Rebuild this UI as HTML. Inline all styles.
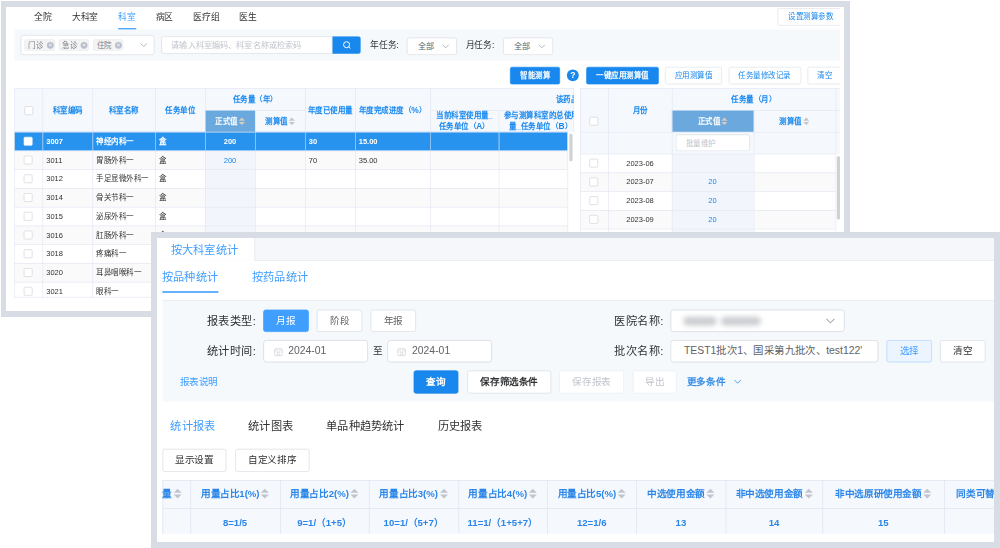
<!DOCTYPE html>
<html lang="zh-CN"><head><meta charset="utf-8"><title>UI</title><style>
html,body{margin:0;padding:0}
body{width:1000px;height:548px;overflow:hidden;background:#fff;position:relative;font-family:"Liberation Sans",sans-serif}
div{position:absolute;box-sizing:border-box}
.frame{background:#d8dde5}
.inner{background:#fff}
.clip{overflow:hidden}
.sc{left:0;top:0;width:1600px;height:900px;transform-origin:0 0}
.t{white-space:nowrap}
.btn{text-align:center;border-radius:3px;border:1px solid #dcdfe6;background:#fff;color:#606266;white-space:nowrap;overflow:hidden}
.btn.primary{background:#1888ee;border-color:#1888ee;color:#fff}
.btn.primary2{background:#409eff;border-color:#409eff;color:#fff}
.btn.bluetx{color:#1888ee}
.btn.light{background:#ecf5ff;border-color:#b3d8ff;color:#409eff}
.btn.dis{color:#c0c4cc;border-color:#ebeef5}
.inp{background:#fff;border:1px solid #d5d9e0;border-radius:4px}
.tag{background:#f4f4f5;border:1px solid #e6e7ea;border-radius:3px;font-size:12px;color:#7a7d84;line-height:16px;padding-left:5px}
.tag .x{position:absolute;right:1px;top:2.5px;width:11px;height:11px;border-radius:50%;background:#b9bfcc}
.tag .x:before,.tag .x:after{content:"";position:absolute;left:5px;top:2.5px;width:1px;height:6px;background:rgba(255,255,255,.75);transform:rotate(45deg)}
.tag .x:after{transform:rotate(-45deg)}
.q{border-radius:50%;background:#1888ee;color:#fff;font-weight:bold;font-size:14px;line-height:19px;text-align:center}
.cb{background:#fff;border:1px solid #cdd1d9;border-radius:2px}
.caret{display:inline-block;position:relative;width:10px;height:14px;vertical-align:middle;margin-left:2px;top:0}
.caret i{position:absolute;left:0;width:0;height:0;border:5px solid transparent}
.caret .up{border-bottom-color:#c0c4cc;top:-4px}
.caret .dn{border-top-color:#c0c4cc;top:8px}
.caret.tan .up{border-bottom-color:#d9cbbd}
.caret.tan .dn{border-top-color:#d9cbbd}
.chev{position:absolute;left:0;top:0}
.blur{top:8px;height:11px;border-radius:6px;background:#cbcdd1;filter:blur(3.5px)}
</style></head><body>
<div class="frame" style="left:1px;top:1px;width:849px;height:316px"></div>
<div class="inner" style="left:6px;top:7px;width:838px;height:304px"></div>
<div class="clip" style="left:0;top:0;width:840px;height:297.5px"><div class="sc" style="transform:scale(.625)">
<div class="t" style="left:55px;top:17px;font-size:14px;color:#303133;line-height:20px;">全院</div>
<div class="t" style="left:115px;top:17px;font-size:14px;color:#303133;line-height:20px;">大科室</div>
<div class="t" style="left:189px;top:17px;font-size:14px;color:#409eff;line-height:20px;">科室</div>
<div class="t" style="left:249px;top:17px;font-size:14px;color:#303133;line-height:20px;">病区</div>
<div class="t" style="left:309px;top:17px;font-size:14px;color:#303133;line-height:20px;">医疗组</div>
<div class="t" style="left:383px;top:17px;font-size:14px;color:#303133;line-height:20px;">医生</div>
<div style="left:188.5px;top:45px;width:29px;height:3.5px;background:#409eff"></div>
<div class="btn plain bluetx" style="left:1244px;top:13px;width:106px;height:28px;line-height:26px;font-size:12px;">设置测算参数</div>
<div style="left:23px;top:47px;width:1321px;height:50px;background:#f5f9fc"></div>
<div class="inp" style="left:33px;top:56px;width:214px;height:32px;"></div>
<div class="tag" style="left:39px;top:63px;width:48.5px;height:18px;"><span>门诊</span><i class="x"></i></div>
<div class="tag" style="left:93.6px;top:63px;width:48.5px;height:18px;"><span>急诊</span><i class="x"></i></div>
<div class="tag" style="left:148.6px;top:63px;width:48.5px;height:18px;"><span>住院</span><i class="x"></i></div>
<div style="left:224px;top:68px;width:12px;height:8px"><svg class="chev" viewBox="0 0 12 8" width="12" height="8"><path d="M1 1.5 L6 6.5 L11 1.5" fill="none" stroke="#a8abb2" stroke-width="1.4"/></svg></div>
<div class="inp" style="left:258px;top:58px;width:274px;height:28px;border-radius:4px 0 0 4px"></div>
<div class="t" style="left:274px;top:62px;font-size:13px;color:#c0c4cc;line-height:20px;">请输入科室编码、科室名称或检索码</div>
<div style="left:532px;top:58px;width:45px;height:28px;background:#1888ee;border-radius:0 4px 4px 0"><svg viewBox="0 0 16 16" width="16" height="16" style="position:absolute;left:15px;top:6px"><circle cx="7.5" cy="7.5" r="4.8" fill="none" stroke="#fff" stroke-width="1.6"/><path d="M11 11 L13.5 13.5" stroke="#fff" stroke-width="1.6"/></svg></div>
<div class="t" style="left:592px;top:62px;font-size:14px;color:#303133;line-height:20px;">年任务:</div>
<div class="inp" style="left:651px;top:59.5px;width:80px;height:28px;"></div>
<div class="t" style="left:668px;top:63.5px;font-size:13px;color:#606266;line-height:20px;">全部</div>
<div style="left:707px;top:70px;width:12px;height:8px"><svg class="chev" viewBox="0 0 12 8" width="12" height="8"><path d="M1 1.5 L6 6.5 L11 1.5" fill="none" stroke="#a8abb2" stroke-width="1.4"/></svg></div>
<div class="t" style="left:745px;top:62px;font-size:14px;color:#303133;line-height:20px;">月任务:</div>
<div class="inp" style="left:805px;top:59.5px;width:80px;height:28px;"></div>
<div class="t" style="left:822px;top:63.5px;font-size:13px;color:#606266;line-height:20px;">全部</div>
<div style="left:861px;top:70px;width:12px;height:8px"><svg class="chev" viewBox="0 0 12 8" width="12" height="8"><path d="M1 1.5 L6 6.5 L11 1.5" fill="none" stroke="#a8abb2" stroke-width="1.4"/></svg></div>
<div class="btn primary" style="left:816px;top:107px;width:80px;height:28px;line-height:26px;font-size:12px;font-weight:bold;">智能测算</div>
<div class="q" style="left:907px;top:111px;width:19px;height:19px">?</div>
<div class="btn primary" style="left:938px;top:107px;width:115.5px;height:28px;line-height:26px;font-size:12px;font-weight:bold;">一键应用测算值</div>
<div class="btn plain bluetx" style="left:1063.5px;top:107px;width:91.5px;height:28px;line-height:26px;font-size:12px;">应用测算值</div>
<div class="btn plain bluetx" style="left:1165.5px;top:107px;width:116px;height:28px;line-height:26px;font-size:12px;">任务量修改记录</div>
<div class="btn plain bluetx" style="left:1291.5px;top:107px;width:56.5px;height:28px;line-height:26px;font-size:12px;">清空</div>
<div style="left:23px;top:141px;width:895px;height:70px;background:#f5f8fd"></div>
<div style="left:328px;top:211px;width:80px;height:309px;background:#f2f6fc"></div>
<div style="left:23px;top:241px;width:305px;height:30px;background:#fafafa"></div>
<div style="left:408px;top:241px;width:500px;height:30px;background:#fafafa"></div>
<div style="left:23px;top:301px;width:305px;height:30px;background:#fafafa"></div>
<div style="left:408px;top:301px;width:500px;height:30px;background:#fafafa"></div>
<div style="left:23px;top:361px;width:305px;height:30px;background:#fafafa"></div>
<div style="left:408px;top:361px;width:500px;height:30px;background:#fafafa"></div>
<div style="left:23px;top:421px;width:305px;height:30px;background:#fafafa"></div>
<div style="left:408px;top:421px;width:500px;height:30px;background:#fafafa"></div>
<div style="left:23px;top:211px;width:885px;height:30px;background:#2793ef"></div>
<div style="left:328px;top:176px;width:80px;height:35px;background:#6aa8de"></div>
<div style="left:23px;top:141px;width:895px;height:1px;background:#e2e6f3"></div>
<div style="left:328px;top:176px;width:160px;height:1px;background:#e2e6f3"></div>
<div style="left:688px;top:176px;width:230px;height:1px;background:#e2e6f3"></div>
<div style="left:23px;top:211px;width:885px;height:1px;background:#e2e6f3"></div>
<div style="left:23px;top:241px;width:885px;height:1px;background:#e2e6f3"></div>
<div style="left:23px;top:271px;width:885px;height:1px;background:#e2e6f3"></div>
<div style="left:23px;top:301px;width:885px;height:1px;background:#e2e6f3"></div>
<div style="left:23px;top:331px;width:885px;height:1px;background:#e2e6f3"></div>
<div style="left:23px;top:361px;width:885px;height:1px;background:#e2e6f3"></div>
<div style="left:23px;top:391px;width:885px;height:1px;background:#e2e6f3"></div>
<div style="left:23px;top:421px;width:885px;height:1px;background:#e2e6f3"></div>
<div style="left:23px;top:451px;width:885px;height:1px;background:#e2e6f3"></div>
<div style="left:23px;top:481px;width:885px;height:1px;background:#e2e6f3"></div>
<div style="left:23px;top:475px;width:885px;height:1px;background:#e2e6f3"></div>
<div style="left:23px;top:141px;width:1px;height:379px;background:#e2e6f3"></div>
<div style="left:68px;top:141px;width:1px;height:379px;background:#e2e6f3"></div>
<div style="left:148px;top:141px;width:1px;height:379px;background:#e2e6f3"></div>
<div style="left:248px;top:141px;width:1px;height:379px;background:#e2e6f3"></div>
<div style="left:328px;top:141px;width:1px;height:379px;background:#e2e6f3"></div>
<div style="left:408px;top:176px;width:1px;height:344px;background:#e2e6f3"></div>
<div style="left:488px;top:141px;width:1px;height:379px;background:#e2e6f3"></div>
<div style="left:568px;top:141px;width:1px;height:379px;background:#e2e6f3"></div>
<div style="left:688px;top:141px;width:1px;height:379px;background:#e2e6f3"></div>
<div style="left:798px;top:176px;width:1px;height:344px;background:#e2e6f3"></div>
<div style="left:908px;top:211px;width:1px;height:309px;background:#e2e6f3"></div>
<div style="left:917px;top:141px;width:1px;height:70px;background:#e2e6f3"></div>
<div style="left:68px;top:211px;width:1px;height:30px;background:#7fbcf5"></div>
<div style="left:148px;top:211px;width:1px;height:30px;background:#7fbcf5"></div>
<div style="left:248px;top:211px;width:1px;height:30px;background:#7fbcf5"></div>
<div style="left:328px;top:211px;width:1px;height:30px;background:#7fbcf5"></div>
<div style="left:408px;top:211px;width:1px;height:30px;background:#7fbcf5"></div>
<div style="left:488px;top:211px;width:1px;height:30px;background:#7fbcf5"></div>
<div style="left:568px;top:211px;width:1px;height:30px;background:#7fbcf5"></div>
<div style="left:688px;top:211px;width:1px;height:30px;background:#7fbcf5"></div>
<div style="left:798px;top:211px;width:1px;height:30px;background:#7fbcf5"></div>
<div class="cb" style="left:39px;top:170px;width:14px;height:14px;"></div>
<div class="t" style="left:68px;top:166px;width:80px;text-align:center;font-size:12px;color:#1888ee;line-height:20px;font-weight:bold;">科室编码</div>
<div class="t" style="left:-2px;top:166px;width:400px;text-align:center;font-size:12px;color:#1888ee;line-height:20px;font-weight:bold;">科室名称</div>
<div class="t" style="left:88px;top:166px;width:400px;text-align:center;font-size:12px;color:#1888ee;line-height:20px;font-weight:bold;">任务单位</div>
<div class="t" style="left:208px;top:148.5px;width:400px;text-align:center;font-size:12px;color:#1888ee;line-height:20px;font-weight:bold;">任务量（年）</div>
<div class="t" style="left:168px;top:183.5px;width:400px;text-align:center;font-size:12px;color:#fff;line-height:20px;font-weight:bold;">正式值<span class="caret tan"><i class="up"></i><i class="dn"></i></span></div>
<div class="t" style="left:248px;top:183.5px;width:400px;text-align:center;font-size:12px;color:#1888ee;line-height:20px;font-weight:bold;">测算值<span class="caret"><i class="up"></i><i class="dn"></i></span></div>
<div class="t" style="left:328px;top:166px;width:400px;text-align:center;font-size:12px;color:#1888ee;line-height:20px;font-weight:bold;">年度已使用量</div>
<div class="t" style="left:428px;top:166px;width:400px;text-align:center;font-size:12px;color:#1888ee;line-height:20px;font-weight:bold;">年度完成进度（<span style="font-size:13.5px">%</span>）</div>
<div class="t" style="left:543px;top:175.2px;width:400px;text-align:center;font-size:12px;color:#1888ee;line-height:20px;font-weight:bold;">当前科室使用量_</div>
<div class="t" style="left:543px;top:191.5px;width:400px;text-align:center;font-size:12px;color:#1888ee;line-height:20px;font-weight:bold;">任务单位（<span style="font-size:13.5px">A</span>）</div>
<div class="clip" style="left:798px;top:141px;width:120px;height:70px"><div style="left:-798px;top:-141px">
<div class="t" style="left:666px;top:175.2px;width:400px;text-align:center;font-size:12px;color:#1888ee;line-height:20px;font-weight:bold;">参与测算科室的总使用</div>
<div class="t" style="left:665px;top:191.5px;width:400px;text-align:center;font-size:12px;color:#1888ee;line-height:20px;font-weight:bold;">量_任务单位（<span style="font-size:13.5px">B</span>）</div>
<div class="t" style="left:889px;top:148.5px;font-size:12px;color:#1888ee;line-height:20px;font-weight:bold;">该药品名称</div>
</div></div>
<div style="left:911px;top:214px;width:4.5px;height:44px;background:#d0d1d4;border-radius:2px"></div>
<div class="cb" style="left:38px;top:218.5px;width:14px;height:14px;border-color:#fff"></div>
<div class="t" style="left:74px;top:215.5px;font-size:12px;color:#fff;line-height:20px;font-weight:bold;">3007</div>
<div class="t" style="left:154px;top:215.5px;font-size:12px;color:#fff;line-height:20px;font-weight:bold;">神经内科一</div>
<div class="t" style="left:254px;top:215.5px;font-size:12px;color:#fff;line-height:20px;font-weight:bold;">盒</div>
<div class="t" style="left:168px;top:215.5px;width:400px;text-align:center;font-size:12px;color:#fff;line-height:20px;font-weight:bold;">200</div>
<div class="t" style="left:494px;top:215.5px;font-size:12px;color:#fff;line-height:20px;font-weight:bold;">30</div>
<div class="t" style="left:574px;top:215.5px;font-size:12px;color:#fff;line-height:20px;font-weight:bold;">15.00</div>
<div class="cb" style="left:38px;top:248.5px;width:14px;height:14px;"></div>
<div class="t" style="left:74px;top:245.5px;font-size:12px;color:#303133;line-height:20px;">3011</div>
<div class="t" style="left:154px;top:245.5px;font-size:12px;color:#303133;line-height:20px;">胃肠外科一</div>
<div class="t" style="left:254px;top:245.5px;font-size:12px;color:#303133;line-height:20px;">盒</div>
<div class="t" style="left:168px;top:245.5px;width:400px;text-align:center;font-size:12px;color:#1888ee;line-height:20px;">200</div>
<div class="t" style="left:494px;top:245.5px;font-size:12px;color:#303133;line-height:20px;">70</div>
<div class="t" style="left:574px;top:245.5px;font-size:12px;color:#303133;line-height:20px;">35.00</div>
<div class="cb" style="left:38px;top:278.5px;width:14px;height:14px;"></div>
<div class="t" style="left:74px;top:275.5px;font-size:12px;color:#303133;line-height:20px;">3012</div>
<div class="t" style="left:154px;top:275.5px;font-size:12px;color:#303133;line-height:20px;">手足显微外科一</div>
<div class="t" style="left:254px;top:275.5px;font-size:12px;color:#303133;line-height:20px;">盒</div>
<div class="cb" style="left:38px;top:308.5px;width:14px;height:14px;"></div>
<div class="t" style="left:74px;top:305.5px;font-size:12px;color:#303133;line-height:20px;">3014</div>
<div class="t" style="left:154px;top:305.5px;font-size:12px;color:#303133;line-height:20px;">骨关节科一</div>
<div class="t" style="left:254px;top:305.5px;font-size:12px;color:#303133;line-height:20px;">盒</div>
<div class="cb" style="left:38px;top:338.5px;width:14px;height:14px;"></div>
<div class="t" style="left:74px;top:335.5px;font-size:12px;color:#303133;line-height:20px;">3015</div>
<div class="t" style="left:154px;top:335.5px;font-size:12px;color:#303133;line-height:20px;">泌尿外科一</div>
<div class="t" style="left:254px;top:335.5px;font-size:12px;color:#303133;line-height:20px;">盒</div>
<div class="cb" style="left:38px;top:368.5px;width:14px;height:14px;"></div>
<div class="t" style="left:74px;top:365.5px;font-size:12px;color:#303133;line-height:20px;">3016</div>
<div class="t" style="left:154px;top:365.5px;font-size:12px;color:#303133;line-height:20px;">肛肠外科一</div>
<div class="t" style="left:254px;top:365.5px;font-size:12px;color:#303133;line-height:20px;">盒</div>
<div class="t" style="left:168px;top:365.5px;width:400px;text-align:center;font-size:12px;color:#1888ee;line-height:20px;">200</div>
<div class="t" style="left:494px;top:365.5px;font-size:12px;color:#303133;line-height:20px;">80</div>
<div class="t" style="left:574px;top:365.5px;font-size:12px;color:#303133;line-height:20px;">40.00</div>
<div class="cb" style="left:38px;top:398.5px;width:14px;height:14px;"></div>
<div class="t" style="left:74px;top:395.5px;font-size:12px;color:#303133;line-height:20px;">3018</div>
<div class="t" style="left:154px;top:395.5px;font-size:12px;color:#303133;line-height:20px;">疼痛科一</div>
<div class="t" style="left:254px;top:395.5px;font-size:12px;color:#303133;line-height:20px;">盒</div>
<div class="cb" style="left:38px;top:428.5px;width:14px;height:14px;"></div>
<div class="t" style="left:74px;top:425.5px;font-size:12px;color:#303133;line-height:20px;">3020</div>
<div class="t" style="left:154px;top:425.5px;font-size:12px;color:#303133;line-height:20px;">耳鼻咽喉科一</div>
<div class="t" style="left:254px;top:425.5px;font-size:12px;color:#303133;line-height:20px;">盒</div>
<div class="cb" style="left:38px;top:458.5px;width:14px;height:14px;"></div>
<div class="t" style="left:74px;top:455.5px;font-size:12px;color:#303133;line-height:20px;">3021</div>
<div class="t" style="left:154px;top:455.5px;font-size:12px;color:#303133;line-height:20px;">眼科一</div>
<div class="t" style="left:254px;top:455.5px;font-size:12px;color:#303133;line-height:20px;">盒</div>
<div style="left:928px;top:141px;width:416px;height:105px;background:#f5f8fd"></div>
<div style="left:1075px;top:246px;width:131px;height:274px;background:#f2f6fc"></div>
<div style="left:928px;top:276px;width:147px;height:30px;background:#fafafa"></div>
<div style="left:1206px;top:276px;width:131px;height:30px;background:#fafafa"></div>
<div style="left:928px;top:336px;width:147px;height:30px;background:#fafafa"></div>
<div style="left:1206px;top:336px;width:131px;height:30px;background:#fafafa"></div>
<div style="left:928px;top:396px;width:147px;height:30px;background:#fafafa"></div>
<div style="left:1206px;top:396px;width:131px;height:30px;background:#fafafa"></div>
<div style="left:928px;top:456px;width:147px;height:30px;background:#fafafa"></div>
<div style="left:1206px;top:456px;width:131px;height:30px;background:#fafafa"></div>
<div style="left:1075px;top:176px;width:131px;height:35px;background:#6aa8de"></div>
<div style="left:928px;top:141px;width:416px;height:1px;background:#e2e6f3"></div>
<div style="left:1075px;top:176px;width:269px;height:1px;background:#e2e6f3"></div>
<div style="left:928px;top:211px;width:416px;height:1px;background:#e2e6f3"></div>
<div style="left:928px;top:246px;width:409px;height:1px;background:#e2e6f3"></div>
<div style="left:928px;top:276px;width:409px;height:1px;background:#e2e6f3"></div>
<div style="left:928px;top:306px;width:409px;height:1px;background:#e2e6f3"></div>
<div style="left:928px;top:336px;width:409px;height:1px;background:#e2e6f3"></div>
<div style="left:928px;top:366px;width:409px;height:1px;background:#e2e6f3"></div>
<div style="left:928px;top:396px;width:409px;height:1px;background:#e2e6f3"></div>
<div style="left:928px;top:426px;width:409px;height:1px;background:#e2e6f3"></div>
<div style="left:928px;top:456px;width:409px;height:1px;background:#e2e6f3"></div>
<div style="left:928px;top:486px;width:409px;height:1px;background:#e2e6f3"></div>
<div style="left:928px;top:516px;width:409px;height:1px;background:#e2e6f3"></div>
<div style="left:928px;top:141px;width:1px;height:379px;background:#e2e6f3"></div>
<div style="left:973px;top:141px;width:1px;height:379px;background:#e2e6f3"></div>
<div style="left:1075px;top:141px;width:1px;height:379px;background:#e2e6f3"></div>
<div style="left:1206px;top:176px;width:1px;height:344px;background:#e2e6f3"></div>
<div style="left:1337px;top:141px;width:1px;height:379px;background:#e2e6f3"></div>
<div class="cb" style="left:943px;top:187px;width:14px;height:14px;"></div>
<div class="t" style="left:824px;top:166px;width:400px;text-align:center;font-size:12px;color:#1888ee;line-height:20px;font-weight:bold;">月份</div>
<div class="t" style="left:1006px;top:148.5px;width:400px;text-align:center;font-size:12px;color:#1888ee;line-height:20px;font-weight:bold;">任务量（月）</div>
<div class="t" style="left:940px;top:183.5px;width:400px;text-align:center;font-size:12px;color:#fff;line-height:20px;font-weight:bold;">正式值<span class="caret tan"><i class="up"></i><i class="dn"></i></span></div>
<div class="t" style="left:1071px;top:183.5px;width:400px;text-align:center;font-size:12px;color:#1888ee;line-height:20px;font-weight:bold;">测算值<span class="caret"><i class="up"></i><i class="dn"></i></span></div>
<div class="inp" style="left:1081px;top:215px;width:119px;height:27px;"></div>
<div class="t" style="left:1097px;top:218.5px;font-size:12px;color:#c0c4cc;line-height:20px;">批量维护</div>
<div style="left:1339px;top:250px;width:4.5px;height:101px;background:#d0d1d4;border-radius:2px"></div>
<div class="cb" style="left:943px;top:253.5px;width:14px;height:14px;"></div>
<div class="t" style="left:824px;top:250.5px;width:400px;text-align:center;font-size:12px;color:#303133;line-height:20px;">2023-06</div>
<div class="cb" style="left:943px;top:283.5px;width:14px;height:14px;"></div>
<div class="t" style="left:824px;top:280.5px;width:400px;text-align:center;font-size:12px;color:#303133;line-height:20px;">2023-07</div>
<div class="t" style="left:940px;top:280.5px;width:400px;text-align:center;font-size:12px;color:#1888ee;line-height:20px;">20</div>
<div class="cb" style="left:943px;top:313.5px;width:14px;height:14px;"></div>
<div class="t" style="left:824px;top:310.5px;width:400px;text-align:center;font-size:12px;color:#303133;line-height:20px;">2023-08</div>
<div class="t" style="left:940px;top:310.5px;width:400px;text-align:center;font-size:12px;color:#1888ee;line-height:20px;">20</div>
<div class="cb" style="left:943px;top:343.5px;width:14px;height:14px;"></div>
<div class="t" style="left:824px;top:340.5px;width:400px;text-align:center;font-size:12px;color:#303133;line-height:20px;">2023-09</div>
<div class="t" style="left:940px;top:340.5px;width:400px;text-align:center;font-size:12px;color:#1888ee;line-height:20px;">20</div>
<div class="cb" style="left:943px;top:373.5px;width:14px;height:14px;"></div>
<div class="t" style="left:824px;top:370.5px;width:400px;text-align:center;font-size:12px;color:#303133;line-height:20px;">2023-10</div>
<div class="t" style="left:940px;top:370.5px;width:400px;text-align:center;font-size:12px;color:#1888ee;line-height:20px;">20</div>
</div></div>
<div class="frame" style="left:150.5px;top:232px;width:849.5px;height:316px"></div>
<div class="inner" style="left:157px;top:237.5px;width:836.75px;height:304px"></div>
<div class="clip" style="left:157px;top:237.5px;width:836.75px;height:296px"><div class="sc" style="transform:scale(.8);left:-157px;top:-237.5px">
<div style="left:196.25px;top:296.88px;width:1046.25px;height:28.88px;background:#f5f7fa;border-bottom:1.5px solid #e6e9ef;box-sizing:border-box"></div>
<div style="left:196.25px;top:296.88px;width:122.5px;height:29.38px;background:#fff;border-right:1px solid #dfe4ec;box-sizing:border-box"></div>
<div class="t" style="left:55.62px;top:301.62px;width:400px;text-align:center;font-size:14px;color:#409eff;line-height:20px;">按大科室统计</div>
<div class="t" style="left:202.5px;top:335.94px;font-size:14px;color:#409eff;line-height:20px;">按品种统计</div>
<div class="t" style="left:315px;top:335.94px;font-size:14px;color:#409eff;line-height:20px;">按药品统计</div>
<div style="left:202.5px;top:363.5px;width:70.94px;height:2.5px;background:#409eff"></div>
<div style="left:202.5px;top:375px;width:1040px;height:126.56px;background:#f5f9fc;border-top:1.5px solid #e9edf2"></div>
<div class="t" style="left:258.75px;top:390.62px;font-size:14px;color:#303133;line-height:20px;letter-spacing:.3px;">报表类型:</div>
<div class="btn primary2" style="left:329.06px;top:386.56px;width:56.88px;height:28.12px;line-height:26.12px;font-size:12px;">月报</div>
<div class="btn plain" style="left:396.25px;top:386.56px;width:56.25px;height:28.12px;line-height:26.12px;font-size:12px;">阶段</div>
<div class="btn plain" style="left:463.44px;top:386.56px;width:56.25px;height:28.12px;line-height:26.12px;font-size:12px;">年报</div>
<div class="t" style="left:258.75px;top:429.38px;font-size:14px;color:#303133;line-height:20px;letter-spacing:.3px;">统计时间:</div>
<div class="inp" style="left:329.06px;top:425.31px;width:131.25px;height:27.94px;"><svg viewBox="0 0 14 14" width="12" height="12" style="position:absolute;left:11.5px;top:7.5px"><rect x="1.5" y="2.5" width="11" height="10" rx="1.5" fill="none" stroke="#c8ccd4" stroke-width="1"/><path d="M1.5 5.5h11M4.5 1v3M9.5 1v3M4 8h6M4 10.5h6M5.8 6v6M8.2 6v6" stroke="#d4d7de" stroke-width=".7" fill="none"/></svg></div>
<div class="t" style="left:360.31px;top:429.38px;font-size:13px;color:#606266;line-height:20px;">2024-01</div>
<div class="t" style="left:272.5px;top:429.38px;width:400px;text-align:center;font-size:12px;color:#303133;line-height:20px;">至</div>
<div class="inp" style="left:483.75px;top:425.31px;width:131.25px;height:27.94px;"><svg viewBox="0 0 14 14" width="12" height="12" style="position:absolute;left:11.5px;top:7.5px"><rect x="1.5" y="2.5" width="11" height="10" rx="1.5" fill="none" stroke="#c8ccd4" stroke-width="1"/><path d="M1.5 5.5h11M4.5 1v3M9.5 1v3M4 8h6M4 10.5h6M5.8 6v6M8.2 6v6" stroke="#d4d7de" stroke-width=".7" fill="none"/></svg></div>
<div class="t" style="left:515px;top:429.38px;font-size:13px;color:#606266;line-height:20px;">2024-01</div>
<div class="t" style="left:768.12px;top:390.62px;font-size:14px;color:#303133;line-height:20px;letter-spacing:.3px;">医院名称:</div>
<div class="inp" style="left:838.44px;top:386.56px;width:217.81px;height:28.12px;"><div class="blur" style="left:15px;width:42px"></div><div class="blur" style="left:62px;width:50px"></div></div>
<div style="left:1032.44px;top:396.62px;width:12px;height:8px"><svg class="chev" viewBox="0 0 12 8" width="12" height="8"><path d="M1 1.5 L6 6.5 L11 1.5" fill="none" stroke="#a8abb2" stroke-width="1.4"/></svg></div>
<div class="t" style="left:768.12px;top:429.38px;font-size:14px;color:#303133;line-height:20px;letter-spacing:.3px;">批次名称:</div>
<div class="inp" style="left:838.44px;top:425.31px;width:260px;height:27.94px;"></div>
<div class="t" style="left:855px;top:429.38px;font-size:13px;color:#606266;line-height:20px;">TEST1批次1、国采第九批次、test122'</div>
<div class="btn light" style="left:1107.81px;top:425.31px;width:57.19px;height:27.94px;line-height:25.94px;font-size:12px;">选择</div>
<div class="btn plain" style="left:1175px;top:425.31px;width:56.88px;height:27.94px;line-height:25.94px;font-size:12px;color:#303133;">清空</div>
<div class="t" style="left:224.38px;top:467.19px;font-size:12px;color:#409eff;line-height:20px;">报表说明</div>
<div class="btn primary" style="left:516.56px;top:463.44px;width:56.88px;height:28.12px;line-height:26.12px;font-size:12px;font-weight:bold;">查询</div>
<div class="btn plain" style="left:583.75px;top:463.44px;width:105.31px;height:28.12px;line-height:26.12px;font-size:12px;font-weight:bold;color:#303133;">保存筛选条件</div>
<div class="btn plain dis" style="left:699.38px;top:463.44px;width:80.31px;height:28.12px;line-height:26.12px;font-size:12px;">保存报表</div>
<div class="btn plain dis" style="left:790.62px;top:463.44px;width:55.62px;height:28.12px;line-height:26.12px;font-size:12px;">导出</div>
<div class="t" style="left:858.44px;top:466.75px;font-size:12px;color:#3a8ee6;line-height:20px;font-weight:bold;">更多条件</div>
<div style="left:915.5px;top:473.38px;width:12px;height:8px;transform:scale(.78)"><svg class="chev" viewBox="0 0 12 8" width="12" height="8"><path d="M1 1.5 L6 6.5 L11 1.5" fill="none" stroke="#3a8ee6" stroke-width="1.4"/></svg></div>
<div class="t" style="left:213.12px;top:522.5px;font-size:14px;color:#409eff;line-height:20px;">统计报表</div>
<div class="t" style="left:310.31px;top:522.5px;font-size:14px;color:#303133;line-height:20px;">统计图表</div>
<div class="t" style="left:407.81px;top:522.5px;font-size:14px;color:#303133;line-height:20px;">单品种趋势统计</div>
<div class="t" style="left:546.88px;top:522.5px;font-size:14px;color:#303133;line-height:20px;">历史报表</div>
<div class="btn plain" style="left:203.12px;top:561.25px;width:80px;height:28.75px;line-height:26.75px;font-size:12px;color:#303133;">显示设置</div>
<div class="btn plain" style="left:293.75px;top:561.25px;width:93.12px;height:28.75px;line-height:26.75px;font-size:12px;color:#303133;">自定义排序</div>
<div style="left:202.5px;top:600px;width:1040px;height:67.5px;background:#f5f8fd"></div>
<div style="left:202.5px;top:600px;width:1040px;height:1px;background:#e2e6f3"></div>
<div style="left:202.5px;top:634.88px;width:1040px;height:1px;background:#e2e6f3"></div>
<div style="left:202.5px;top:600px;width:1px;height:67.5px;background:#e2e6f3"></div>
<div style="left:237.88px;top:600px;width:1px;height:67.5px;background:#e2e6f3"></div>
<div style="left:349.75px;top:600px;width:1px;height:67.5px;background:#e2e6f3"></div>
<div style="left:461.25px;top:600px;width:1px;height:67.5px;background:#e2e6f3"></div>
<div style="left:572.5px;top:600px;width:1px;height:67.5px;background:#e2e6f3"></div>
<div style="left:684px;top:600px;width:1px;height:67.5px;background:#e2e6f3"></div>
<div style="left:795.38px;top:600px;width:1px;height:67.5px;background:#e2e6f3"></div>
<div style="left:906.88px;top:600px;width:1px;height:67.5px;background:#e2e6f3"></div>
<div style="left:1028.38px;top:600px;width:1px;height:67.5px;background:#e2e6f3"></div>
<div style="left:1179.75px;top:600px;width:1px;height:67.5px;background:#e2e6f3"></div>
<div class="t" style="left:202.5px;top:606.56px;font-size:12px;color:#2a86e8;line-height:20px;font-weight:bold;">量<span class="caret"><i class="up"></i><i class="dn"></i></span></div>
<div class="t" style="left:93.81px;top:606.56px;width:400px;text-align:center;font-size:12px;color:#2a86e8;line-height:20px;font-weight:bold;">用量占比1(%)<span class="caret"><i class="up"></i><i class="dn"></i></span></div>
<div class="t" style="left:93.81px;top:643.12px;width:400px;text-align:center;font-size:12px;color:#2a86e8;line-height:20px;font-weight:bold;">8=1/5</div>
<div class="t" style="left:205.5px;top:606.56px;width:400px;text-align:center;font-size:12px;color:#2a86e8;line-height:20px;font-weight:bold;">用量占比2(%)<span class="caret"><i class="up"></i><i class="dn"></i></span></div>
<div class="t" style="left:205.5px;top:643.12px;width:400px;text-align:center;font-size:12px;color:#2a86e8;line-height:20px;font-weight:bold;">9=1/（1+5）</div>
<div class="t" style="left:316.88px;top:606.56px;width:400px;text-align:center;font-size:12px;color:#2a86e8;line-height:20px;font-weight:bold;">用量占比3(%)<span class="caret"><i class="up"></i><i class="dn"></i></span></div>
<div class="t" style="left:316.88px;top:643.12px;width:400px;text-align:center;font-size:12px;color:#2a86e8;line-height:20px;font-weight:bold;">10=1/（5+7）</div>
<div class="t" style="left:428.25px;top:606.56px;width:400px;text-align:center;font-size:12px;color:#2a86e8;line-height:20px;font-weight:bold;">用量占比4(%)<span class="caret"><i class="up"></i><i class="dn"></i></span></div>
<div class="t" style="left:428.25px;top:643.12px;width:400px;text-align:center;font-size:12px;color:#2a86e8;line-height:20px;font-weight:bold;">11=1/（1+5+7）</div>
<div class="t" style="left:539.69px;top:606.56px;width:400px;text-align:center;font-size:12px;color:#2a86e8;line-height:20px;font-weight:bold;">用量占比5(%)<span class="caret"><i class="up"></i><i class="dn"></i></span></div>
<div class="t" style="left:539.69px;top:643.12px;width:400px;text-align:center;font-size:12px;color:#2a86e8;line-height:20px;font-weight:bold;">12=1/6</div>
<div class="t" style="left:651.12px;top:606.56px;width:400px;text-align:center;font-size:12px;color:#2a86e8;line-height:20px;font-weight:bold;">中选使用金额<span class="caret"><i class="up"></i><i class="dn"></i></span></div>
<div class="t" style="left:651.12px;top:643.12px;width:400px;text-align:center;font-size:12px;color:#2a86e8;line-height:20px;font-weight:bold;">13</div>
<div class="t" style="left:767.62px;top:606.56px;width:400px;text-align:center;font-size:12px;color:#2a86e8;line-height:20px;font-weight:bold;">非中选使用金额<span class="caret"><i class="up"></i><i class="dn"></i></span></div>
<div class="t" style="left:767.62px;top:643.12px;width:400px;text-align:center;font-size:12px;color:#2a86e8;line-height:20px;font-weight:bold;">14</div>
<div class="t" style="left:904.06px;top:606.56px;width:400px;text-align:center;font-size:12px;color:#2a86e8;line-height:20px;font-weight:bold;">非中选原研使用金额<span class="caret"><i class="up"></i><i class="dn"></i></span></div>
<div class="t" style="left:904.06px;top:643.12px;width:400px;text-align:center;font-size:12px;color:#2a86e8;line-height:20px;font-weight:bold;">15</div>
<div class="t" style="left:1195.62px;top:606.56px;font-size:12px;color:#2a86e8;line-height:20px;font-weight:bold;">同类可替代</div>
</div></div>
</body></html>
